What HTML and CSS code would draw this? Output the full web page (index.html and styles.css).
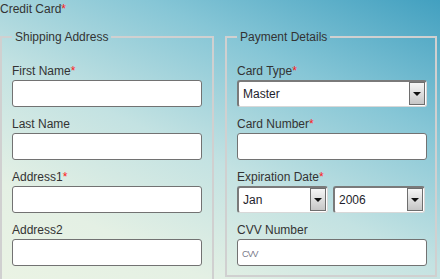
FILE: index.html
```html
<!DOCTYPE html>
<html lang="en">
<head>
    <meta charset="UTF-8">
    <meta name="viewport" content="width=device-width, initial-scale=1.0">
    <title>Credit Card</title>
    <link rel="stylesheet" href="styles.css">
</head>
<body>
    <div class="title">Credit Card<span class="req">*</span></div>

    <div class="columns">
        <!-- Shipping Address -->
        <fieldset class="group group-left">
            <legend>Shipping Address</legend>
            <div class="field">
                <label>First Name<span class="req">*</span></label>
                <input type="text" class="text-input">
            </div>
            <div class="field">
                <label>Last Name</label>
                <input type="text" class="text-input">
            </div>
            <div class="field">
                <label>Address1<span class="req">*</span></label>
                <input type="text" class="text-input">
            </div>
            <div class="field">
                <label>Address2</label>
                <input type="text" class="text-input">
            </div>
        </fieldset>

        <!-- Payment Details -->
        <fieldset class="group group-right">
            <legend>Payment Details</legend>
            <div class="field">
                <label>Card Type<span class="req">*</span></label>
                <div class="select">
                    <span class="select-value">Master</span>
                    <span class="select-btn"></span>
                </div>
            </div>
            <div class="field">
                <label>Card Number<span class="req">*</span></label>
                <input type="text" class="text-input">
            </div>
            <div class="field">
                <label>Expiration Date<span class="req">*</span></label>
                <div class="expiry">
                    <div class="select">
                        <span class="select-value">Jan</span>
                        <span class="select-btn"></span>
                    </div>
                    <div class="select">
                        <span class="select-value">2006</span>
                        <span class="select-btn"></span>
                    </div>
                </div>
            </div>
            <div class="field">
                <label>CVV Number</label>
                <input type="text" class="text-input" placeholder="CVV">
            </div>
        </fieldset>
    </div>
</body>
</html>
```

FILE: styles.css
```css
/* General Reset */
* {
    box-sizing: border-box;
}

html, body {
    height: 100%;
}

body {
    margin: 0;
    overflow: hidden;
    font-family: "Liberation Sans", Arial, sans-serif;
    font-size: 12px;
    color: #333;
    background: linear-gradient(205deg, #42a0c0 0%, #86c6d6 28%, #c3e2e2 55%, #e4f0e4 80%, #eaf3e4 100%);
}

.req {
    color: #ff1a1a;
}

.title {
    padding-top: 1px;
    line-height: 16px;
}

/* Two columns of fieldsets */
.columns {
    display: grid;
    grid-template-columns: 214px 212px;
    column-gap: 11px;
    align-items: start;
    margin-top: 13px;
}

.group {
    margin: 0;
    min-width: 0;
    border: 2px solid #d0d0d0;
    padding: 10px;
}

.group-left {
    padding-bottom: 40px;
}

.group-right {
    padding: 10px 8px 9px 10px;
}

.group legend {
    padding: 0 3px;
    line-height: 14px;
    color: #333;
}

.field {
    margin-top: 9px;
}

.field label {
    display: block;
    line-height: 16px;
    margin-bottom: 1px;
}

/* Text inputs */
.text-input {
    display: block;
    width: 100%;
    height: 27px;
    margin: 0;
    padding: 0 4px;
    border: 1px solid #727272;
    border-radius: 3px;
    background: #fff;
    font-family: "Liberation Sans", Arial, sans-serif;
    font-size: 12px;
    color: #222;
}

.text-input::placeholder {
    font-size: 9px;
    letter-spacing: -1px;
    color: #7a7a8a;
}

/* Select boxes */
.select {
    display: flex;
    align-items: stretch;
    height: 27px;
    background: #fff;
    border-top: 2px solid #7a7a7a;
    border-left: 2px solid #7a7a7a;
    border-right: 1px solid #d8d8d8;
    border-bottom: 1px solid #d8d8d8;
    border-radius: 3px;
}

.select-value {
    flex: 1;
    display: flex;
    align-items: center;
    padding-left: 4px;
    color: #1e1e2c;
}

.select-btn {
    width: 16px;
    margin: 0 1px 1px 0;
    border: 1px solid #6e6e6e;
    background: linear-gradient(#f6f6f6, #c6c6c6);
    display: flex;
    align-items: center;
    justify-content: center;
}

.select-btn::after {
    content: "";
    border-left: 4px solid transparent;
    border-right: 4px solid transparent;
    border-top: 4px solid #111;
}

.expiry {
    display: grid;
    grid-template-columns: 91px 92px;
    column-gap: 5px;
}
```
